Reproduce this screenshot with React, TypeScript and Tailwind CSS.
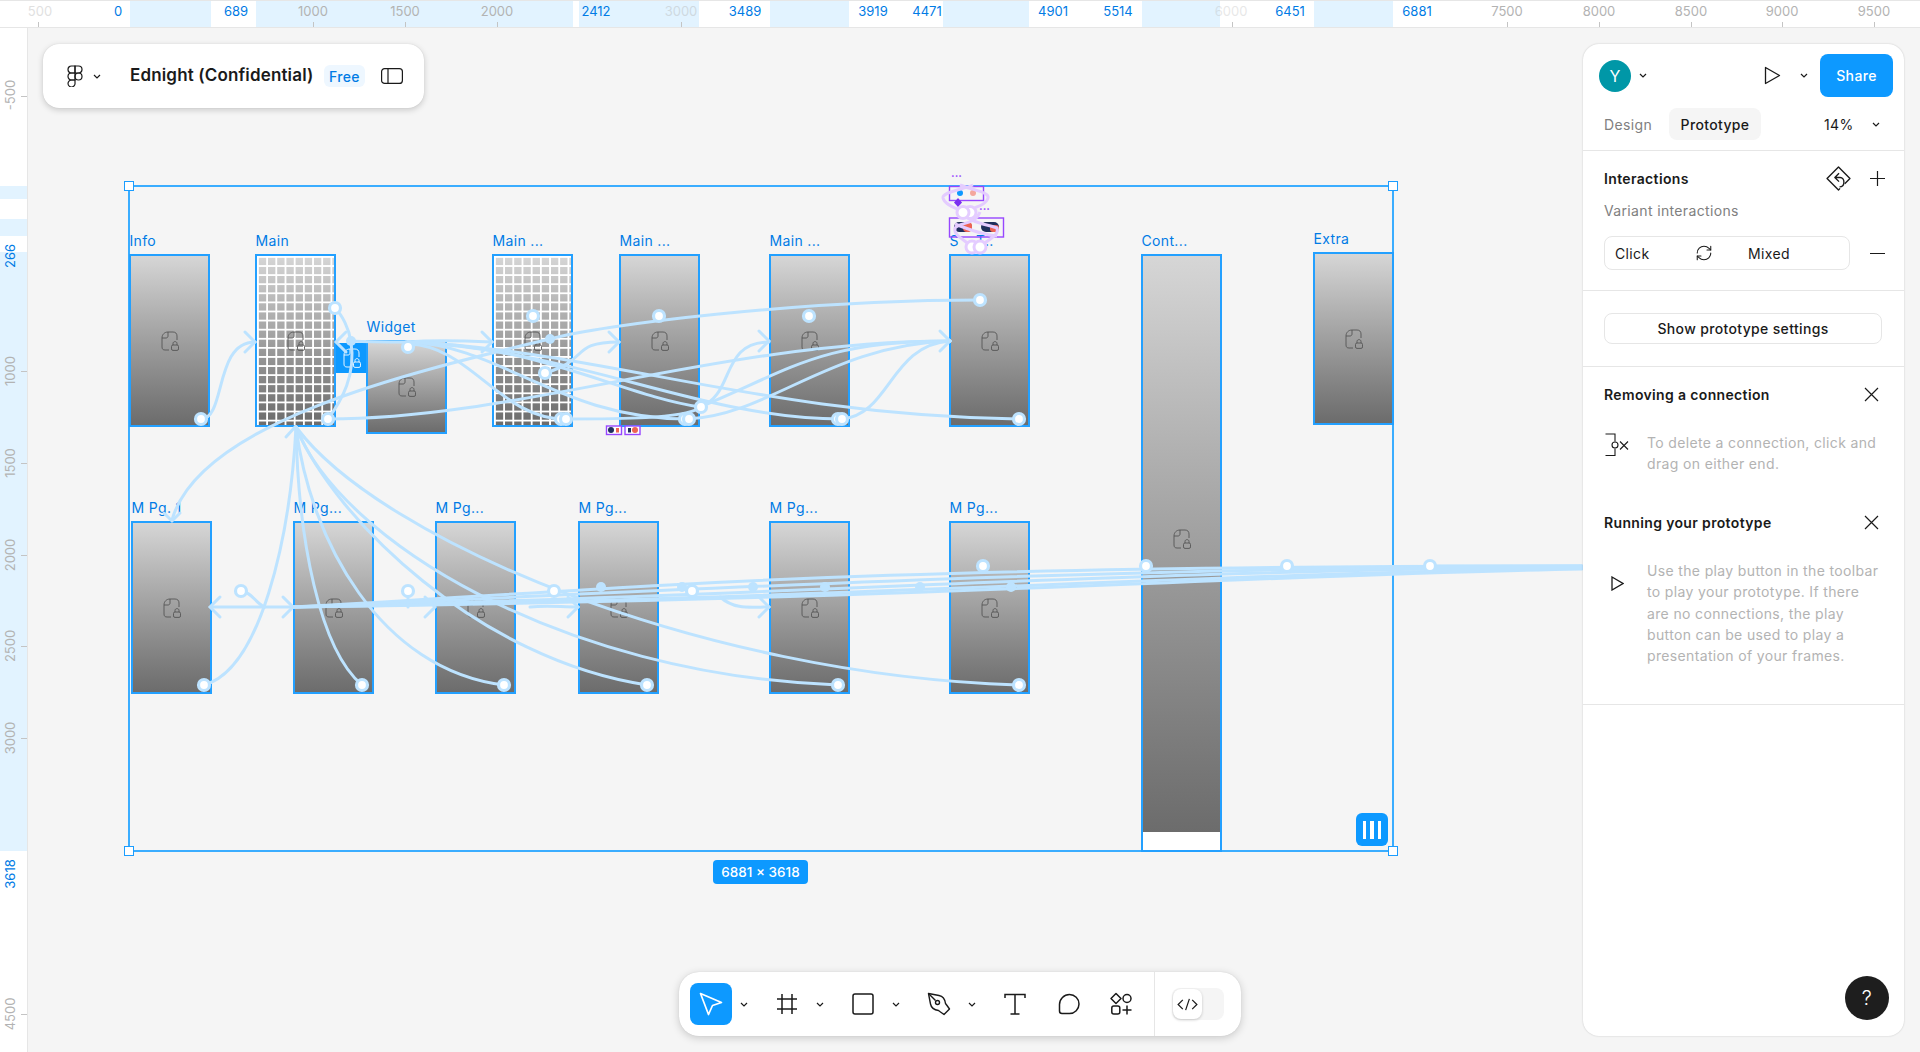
import React from "react";
import { RefreshCw } from "lucide-react";

const topBands = [
  "left-[130px] w-[81px]",
  "left-[256px] w-[317px]",
  "left-[579px] w-[120px]",
  "left-[770px] w-[79px]",
  "left-[943px] w-[86px]",
  "left-[1142px] w-[78px]",
  "left-[1314px] w-[79px]",
];

const topLabels = [
  { t: "500", c: "left-[40px] text-[#b3b3b3] opacity-40" },
  { t: "0", c: "left-[118px] text-[#007be5]" },
  { t: "689", c: "left-[236px] text-[#007be5]" },
  { t: "1000", c: "left-[313px] text-[#b3b3b3]" },
  { t: "1500", c: "left-[405px] text-[#b3b3b3]" },
  { t: "2000", c: "left-[497px] text-[#b3b3b3]" },
  { t: "2412", c: "left-[596px] text-[#007be5]" },
  { t: "3000", c: "left-[681px] text-[#b3b3b3] opacity-40" },
  { t: "3489", c: "left-[745px] text-[#007be5]" },
  { t: "3919", c: "left-[873px] text-[#007be5]" },
  { t: "4471", c: "left-[927px] text-[#007be5]" },
  { t: "4901", c: "left-[1053px] text-[#007be5]" },
  { t: "5514", c: "left-[1118px] text-[#007be5]" },
  { t: "6000", c: "left-[1231px] text-[#b3b3b3] opacity-30" },
  { t: "6451", c: "left-[1290px] text-[#007be5]" },
  { t: "6881", c: "left-[1417px] text-[#007be5]" },
  { t: "7500", c: "left-[1507px] text-[#b3b3b3]" },
  { t: "8000", c: "left-[1599px] text-[#b3b3b3]" },
  { t: "8500", c: "left-[1691px] text-[#b3b3b3]" },
  { t: "9000", c: "left-[1782px] text-[#b3b3b3]" },
  { t: "9500", c: "left-[1874px] text-[#b3b3b3]" },
];

const topTicks = [
  "left-[38px]", "left-[313px]", "left-[405px]", "left-[497px]", "left-[681px]", "left-[1232px]",
  "left-[1507px]", "left-[1599px]", "left-[1691px]", "left-[1782px]", "left-[1874px]",
];

const leftBands = ["top-[158px] h-[13px]", "top-[191px] h-[17px]", "top-[224px] h-[599px]"];

const leftLabels = [
  { t: "-500", c: "top-[67px] text-[#b3b3b3]" },
  { t: "266", c: "top-[228px] text-[#007be5]" },
  { t: "1000", c: "top-[343px] text-[#b3b3b3]" },
  { t: "1500", c: "top-[435px] text-[#b3b3b3]" },
  { t: "2000", c: "top-[527px] text-[#b3b3b3]" },
  { t: "2500", c: "top-[618px] text-[#b3b3b3]" },
  { t: "3000", c: "top-[710px] text-[#b3b3b3]" },
  { t: "3618", c: "top-[846px] text-[#007be5]" },
  { t: "4500", c: "top-[986px] text-[#b3b3b3]" },
];

const leftTicks = ["top-[68px]", "top-[343px]", "top-[435px]", "top-[527px]", "top-[618px]", "top-[710px]", "top-[986px]"];

const frames = [
  { label: "Info", box: "left-[129px] top-[254px] w-[81px] h-[173px]" },
  { label: "Main", box: "left-[255px] top-[254px] w-[81px] h-[173px]", grid: true },
  { label: "Widget", box: "left-[366px] top-[340px] w-[81px] h-[94px]" },
  { label: "Main ...", box: "left-[492px] top-[254px] w-[81px] h-[173px]", grid: true },
  { label: "Main ...", box: "left-[619px] top-[254px] w-[81px] h-[173px]" },
  { label: "Main ...", box: "left-[769px] top-[254px] w-[81px] h-[173px]" },
  { label: "S\u00A0\u00A0\u00A0\u00A0T..", box: "left-[949px] top-[254px] w-[81px] h-[173px]" },
  { label: "Extra", box: "left-[1313px] top-[252px] w-[81px] h-[173px]" },
  { label: "M Pg. 1", box: "left-[131px] top-[521px] w-[81px] h-[173px]" },
  { label: "M Pg...", box: "left-[293px] top-[521px] w-[81px] h-[173px]" },
  { label: "M Pg...", box: "left-[435px] top-[521px] w-[81px] h-[173px]" },
  { label: "M Pg...", box: "left-[578px] top-[521px] w-[81px] h-[173px]" },
  { label: "M Pg...", box: "left-[769px] top-[521px] w-[81px] h-[173px]" },
  { label: "M Pg...", box: "left-[949px] top-[521px] w-[81px] h-[173px]" },
];

const links = [
  "M201 419C226 419 214 342 255 342",
  "M328 419C342 400 356 375 351 342C349 328 342 315 335 308",
  "M328 419C520 419 720 341 950 341",
  "M408 342C430 340 470 341 492 342",
  "M351 341C370 342 390 342 408 342",
  "M408 344C470 345 500 419 565 419",
  "M408 342C500 345 560 419 688 419",
  "M408 342C540 345 620 395 700 407",
  "M408 342C580 350 700 419 842 419",
  "M408 342C600 350 760 415 1018 419",
  "M545 373C590 360 570 342 619 342",
  "M700 407C735 395 720 342 769 342",
  "M700 407C790 370 820 341 950 341",
  "M688 419C770 415 830 345 950 341",
  "M842 419C890 415 890 345 950 341",
  "M565 419C620 419 680 419 700 408",
  "M980 300C800 300 600 325 550 339C420 370 200 420 172 520",
  "M204 685C260 670 290 540 296 427",
  "M362 685C320 650 298 540 296 427",
  "M504 685C380 670 310 540 296 427",
  "M647 685C480 660 335 520 296 427",
  "M838 685C560 675 340 540 296 427",
  "M1018 685C700 675 380 540 296 427",
  "M211 607H293",
  "M241 591C252 592 256 604 265 607",
  "M408 591V607",
  "M293 607C620 590 800 566 1582 566",
  "M293 607C700 590 1000 570 1582 566",
  "M293 607C750 597 1100 571 1582 567",
  "M293 607C800 600 1200 574 1582 568",
  "M293 607C900 600 1250 575 1582 569",
  "M530 607C548 605 560 607 578 607",
  "M720 597C735 610 750 607 769 607",
];

const arrows = [
  "M245 332L255 342L245 352",
  "M346 332L336 342L346 352",
  "M482 332L492 342L482 352",
  "M609 332L619 342L609 352",
  "M759 331L769 341L759 351",
  "M940 331L950 341L940 351",
  "M286 437L295 427L304 437",
  "M164 513L172 521L180 513",
  "M220 597L210 607L220 617",
  "M283 597L293 607L283 617",
  "M425 597L435 607L425 617",
  "M568 597L578 607L568 617",
  "M759 597L769 607L759 617",
];

const nodes = [
  [201, 419], [335, 308], [328, 419], [408, 347], [533, 316], [545, 373], [561, 419], [566, 419],
  [659, 316], [685, 419], [689, 419], [701, 407], [809, 316], [838, 419], [842, 419], [980, 300], [1019, 419],
  [204, 685], [362, 685], [504, 685], [647, 685], [838, 685], [1019, 685], [241, 591], [408, 591],
  [554, 591], [692, 591], [983, 566], [1146, 566], [1287, 566], [1430, 566],
];

const dots = [
  [351, 341], [550, 339], [601, 587], [682, 587], [753, 587], [825, 587], [920, 587], [1011, 587],
];

const handles = [
  "left-[124px] top-[181px]",
  "left-[1388px] top-[181px]",
  "left-[124px] top-[846px]",
  "left-[1388px] top-[846px]",
];

function DocLock({ stroke = "#555555", className = "" }: { stroke?: string; className?: string }) {
  return (
    <svg viewBox="0 0 18 20" fill="none" stroke={stroke} strokeWidth="0.9" className={`w-[18px] h-[20px] ${className}`}>
      <path d="M7 1H12C14.5 1 16 2.5 16 5V9" />
      <path d="M7 1C3.5 1 1 3.5 1 7V16C1 18 2 19 4 19H8" />
      <path d="M7 1V5C7 6.2 6.2 7 5 7H1" />
      <rect x="10.5" y="14" width="7" height="5.4" rx="1.5" />
      <path d="M12 14V12.5C12 10 16 10 16 12.5V14" />
    </svg>
  );
}

function Chevron({ className = "" }: { className?: string }) {
  return (
    <svg viewBox="0 0 8 5" fill="none" stroke="#1a1a1a" strokeWidth="1.2" className={`w-[8px] h-[5px] ${className}`}>
      <path d="M1 1L4 4L7 1" />
    </svg>
  );
}

function Cross() {
  return (
    <svg viewBox="0 0 15 15" fill="none" stroke="#1a1a1a" strokeWidth="1.2" className="w-[15px] h-[15px]">
      <path d="M1 1L14 14M14 1L1 14" />
    </svg>
  );
}

function FigmaLogo() {
  return (
    <svg viewBox="0 0 16 22" fill="none" stroke="#1a1a1a" strokeWidth="1.2" className="w-[16px] h-[22px]">
      <path d="M8 1H4.5A3.5 3.5 0 0 0 4.5 8H8Z" />
      <path d="M8 1H11.5A3.5 3.5 0 0 1 11.5 8H8Z" />
      <path d="M8 8H4.5A3.5 3.5 0 0 0 4.5 15H8Z" />
      <circle cx="11.5" cy="11.5" r="3.5" />
      <path d="M4.5 15H8V18A3.5 3.5 0 1 1 4.5 15Z" />
    </svg>
  );
}

function Tool({ children, className = "" }: { children: React.ReactNode; className?: string }) {
  return <div className={`w-[42px] h-[42px] flex items-center justify-center rounded-lg ${className}`}>{children}</div>;
}

function ToolChevron() {
  return (
    <div className="w-[24px] flex justify-center">
      <Chevron />
    </div>
  );
}

function Toolbar() {
  const ic = "w-[24px] h-[24px]";
  return (
    <div className="absolute left-[679px] top-[972px] w-[562px] h-[64px] bg-white rounded-[20px] shadow-[0_2px_8px_rgba(0,0,0,0.18),0_0_1px_rgba(0,0,0,0.15)] flex items-center pl-[11px]">
      <Tool className="bg-[#0d99ff]">
        <svg viewBox="0 0 24 24" fill="none" stroke="white" strokeWidth="1.7" strokeLinejoin="round" className={ic}>
          <path d="M1.5 1.5L22.5 10.5L13.5 13.5L9.5 22.5Z" />
        </svg>
      </Tool>
      <ToolChevron />
      <Tool className="ml-[10px]">
        <svg viewBox="0 0 24 24" fill="none" stroke="#1a1a1a" strokeWidth="1.5" className={ic}>
          <path d="M7 2V22M17 2V22M2 7H22M2 17H22" />
        </svg>
      </Tool>
      <ToolChevron />
      <Tool className="ml-[10px]">
        <svg viewBox="0 0 24 24" fill="none" stroke="#1a1a1a" strokeWidth="1.5" className={ic}>
          <rect x="2" y="2" width="20" height="20" rx="2" />
        </svg>
      </Tool>
      <ToolChevron />
      <Tool className="ml-[10px]">
        <svg viewBox="0 0 24 24" fill="none" stroke="#1a1a1a" strokeWidth="1.4" strokeLinejoin="round" className={ic}>
          <path d="M1.5 1.5L12 3.5C15.5 4.2 18 7.5 18.5 11.5L20 13.5L22.5 17L17 22.5L13.5 20L11.5 18.5C7.5 18 4.2 15.5 3.5 12Z" />
          <path d="M1.5 1.5L8.5 8.5" />
          <circle cx="10.5" cy="10.5" r="2" />
        </svg>
      </Tool>
      <ToolChevron />
      <Tool className="ml-[10px]">
        <svg viewBox="0 0 24 24" fill="none" stroke="#1a1a1a" strokeWidth="1.5" className={ic}>
          <path d="M2 6V2.5H22V6M12 2.5V22M7.5 22H16.5" />
        </svg>
      </Tool>
      <Tool className="ml-[12px]">
        <svg viewBox="0 0 24 24" fill="none" stroke="#1a1a1a" strokeWidth="1.5" className={ic}>
          <path d="M12.5 2.5A9.5 9.5 0 0 1 12.5 21.5H5C3.5 21.5 2.5 20.5 2.5 19V12.5A10 10 0 0 1 12.5 2.5Z" />
        </svg>
      </Tool>
      <Tool className="ml-[10px]">
        <svg viewBox="0 0 24 24" fill="none" stroke="#1a1a1a" strokeWidth="1.5" strokeLinejoin="round" className={ic}>
          <path d="M7 1.5L12 6.5L7 11.5L2 6.5Z" />
          <circle cx="18" cy="6.5" r="4" />
          <rect x="2.8" y="14" width="8" height="8" rx="2" />
          <path d="M18 13.5V22.5M13.5 18H22.5" />
        </svg>
      </Tool>
      <div className="w-px self-stretch bg-[#e6e6e6] ml-[12px]" />
      <div className="w-[52px] h-[32px] ml-[17px] rounded-lg bg-[#f5f5f5] flex items-center pl-[1px]">
        <div className="w-[29px] h-[30px] rounded-lg bg-white shadow-[0_1px_3px_rgba(0,0,0,0.2)] flex items-center justify-center">
          <svg viewBox="0 0 22 16" fill="none" stroke="#1a1a1a" strokeWidth="1.3" className="w-[21px] h-[15px]">
            <path d="M6 3L1 8L6 13M16 3L21 8L16 13M13 2L9 14" />
          </svg>
        </div>
      </div>
    </div>
  );
}

function RightPanel() {
  return (
    <div className="absolute left-[1583px] top-[44px] w-[321px] h-[992px] bg-white rounded-[16px] shadow-[0_0_2px_rgba(0,0,0,0.2)] flex flex-col text-[14px] tracking-[0.35px] text-[#1a1a1a]">
      <div className="flex flex-col h-[107px] border-b border-[#e6e6e6]">
        <div className="flex items-center h-[43px] mt-[10px] pl-[16px] pr-[11px]">
          <div className="w-[32px] h-[32px] rounded-full bg-[#0097a7] text-white flex items-center justify-center text-[16px]">Y</div>
          <Chevron className="ml-[8px]" />
          <svg viewBox="0 0 17 19" fill="none" stroke="#1a1a1a" strokeWidth="1.3" strokeLinejoin="round" className="w-[17px] h-[19px] ml-auto">
            <path d="M1.5 1.5L15.5 9.5L1.5 17.5Z" />
          </svg>
          <Chevron className="ml-[19px]" />
          <div className="w-[73px] h-[43px] ml-[12px] rounded-lg bg-[#0d99ff] text-white font-medium flex items-center justify-center">Share</div>
        </div>
        <div className="flex items-center h-[32px] mt-[11px] pl-[21px]">
          <span className="text-[#808080] w-[65px]">Design</span>
          <span className="w-[92px] h-[32px] rounded-lg bg-[#f5f5f5] font-medium flex items-center justify-center">Prototype</span>
          <span className="w-[28px] ml-[63px] whitespace-nowrap">14%</span>
          <Chevron className="ml-[20px]" />
        </div>
      </div>
      <div className="flex flex-col h-[140px] border-b border-[#e6e6e6] px-[21px]">
        <div className="flex items-center h-[24px] mt-[15px]">
          <span className="font-semibold">Interactions</span>
          <svg viewBox="0 0 24 24" fill="none" stroke="#1a1a1a" strokeWidth="1.3" strokeLinejoin="round" className="w-[25px] h-[25px] ml-auto">
            <path d="M13.5 21.5L12 23L1 12L12 1L23 12L18 17" />
            <path d="M12.5 7L8.5 11L12.500 15M8.500 11H13.500C18.500 11 18.500 20 13 20" />
          </svg>
          <svg viewBox="0 0 15 15" fill="none" stroke="#1a1a1a" strokeWidth="1.2" className="w-[15px] h-[15px] ml-[19px] mr-[-2px]">
            <path d="M7.5 0V15M0 7.5H15" />
          </svg>
        </div>
        <div className="text-[#808080] mt-[11px] leading-[20px]">Variant interactions</div>
        <div className="flex items-center mt-[15px]">
          <div className="w-[246px] h-[34px] rounded-lg border border-[#e6e6e6] flex items-center pl-[10px]">
            <span className="w-[80px]">Click</span>
            <RefreshCw size={18} strokeWidth={1.4} />
            <span className="ml-[35px]">Mixed</span>
          </div>
          <div className="w-[15px] h-px bg-[#1a1a1a] ml-auto mr-[-2px]" />
        </div>
      </div>
      <div className="h-[76px] border-b border-[#e6e6e6] px-[21px] pt-[22px]">
        <div className="w-[278px] h-[31px] rounded-lg border border-[#e6e6e6] font-medium flex items-center justify-center">Show prototype settings</div>
      </div>
      <div className="flex items-center justify-between pl-[21px] pr-[25px] mt-[17px] h-[20px]">
        <span className="font-semibold">Removing a connection</span>
        <Cross />
      </div>
      <div className="flex pl-[22px] mt-[28px]">
        <svg viewBox="0 0 24 24" fill="none" stroke="#1a1a1a" strokeWidth="1.1" className="w-[24px] h-[24px] mt-[1px]">
          <path d="M0.5 1H10V8.5M10 15.5V22.5H0.5" />
          <circle cx="10" cy="12" r="3" />
          <path d="M15 8.5L23 16.5M23 8.5L15 16.5" />
        </svg>
        <p className="w-[240px] ml-[18px] text-[#b3b3b3] leading-[21.3px]">To delete a connection, click and drag on either end.</p>
      </div>
      <div className="flex items-center justify-between pl-[21px] pr-[25px] mt-[38px] h-[20px]">
        <span className="font-semibold">Running your prototype</span>
        <Cross />
      </div>
      <div className="flex pl-[22px] mt-[27.5px]">
        <div className="w-[24px] flex justify-center pt-[16px]">
          <svg viewBox="0 0 13 15" fill="none" stroke="#1a1a1a" strokeWidth="1.3" className="w-[13px] h-[15px]">
            <path d="M1 1L12 7.5L1 14Z" />
          </svg>
        </div>
        <p className="w-[240px] ml-[18px] text-[#b3b3b3] leading-[21.3px] whitespace-nowrap">
          Use the play button in the toolbar
          <br />
          to play your prototype. If there
          <br />
          are no connections, the play
          <br />
          button can be used to play a
          <br />
          presentation of your frames.
        </p>
      </div>
      <div className="h-px bg-[#e6e6e6] mt-[37px]" />
      <div className="mt-auto ml-auto mr-[15px] mb-[16px] w-[44px] h-[44px] rounded-full bg-[#1e1e1e] text-white flex items-center justify-center text-[20px] font-light">?</div>
    </div>
  );
}

export default function App() {
  return (
    <div className="relative w-full h-[1052px] overflow-hidden bg-[#f5f5f5] font-['Inter',sans-serif] text-[#1a1a1a]">
      {/* rulers */}
      <div className="relative h-[28px] bg-white border-t border-b border-[#e6e6e6] overflow-hidden">
        {topBands.map((c) => (
          <div key={c} className={`absolute top-0 h-full bg-[#e2f3ff] ${c}`} />
        ))}
        {topTicks.map((c) => (
          <div key={c} className={`absolute top-[21px] h-[7px] w-px bg-[#c4c4c4] ${c}`} />
        ))}
        {topLabels.map((l) => (
          <span key={l.t} className={`absolute top-[2px] -translate-x-1/2 text-[13px] leading-[16px] ${l.c}`}>
            {l.t}
          </span>
        ))}
      </div>
      <div className="relative w-[28px] h-[1024px] bg-white border-r border-[#e6e6e6] overflow-hidden">
        {leftBands.map((c) => (
          <div key={c} className={`absolute left-0 w-full bg-[#e2f3ff] ${c}`} />
        ))}
        {leftTicks.map((c) => (
          <div key={c} className={`absolute left-[21px] h-px w-[6px] bg-[#c4c4c4] ${c}`} />
        ))}
        {leftLabels.map((l) => (
          <span key={l.t} className={`absolute left-[10px] -translate-x-1/2 -translate-y-1/2 -rotate-90 text-[13px] leading-[16px] whitespace-nowrap ${l.c}`}>
            {l.t}
          </span>
        ))}
      </div>

      {/* canvas frames */}
      <div className="absolute left-[128px] top-[185px] w-[1266px] h-[667px] border-2 border-[#3aadff]" />
      {frames.map((f) => (
        <div
          key={f.box}
          className={`absolute ${f.box} border-2 border-[#23a0ff] bg-linear-to-b from-[#d6d6d6] to-[#6c6c6c] flex items-center justify-center`}
        >
          {f.grid && <div className="absolute inset-0 bg-[linear-gradient(to_right,#ffffff_1.5px,transparent_1.5px),linear-gradient(to_bottom,#ffffff_1.5px,transparent_1.5px)] bg-size-[9.2px_9.1px]" />}
          <DocLock className="relative" />
          <span className="absolute left-[-1.5px] bottom-full mb-[7px] text-[14px] tracking-[0.35px] leading-[17px] text-[#007be5] whitespace-nowrap">{f.label}</span>
        </div>
      ))}
      <div className="absolute left-[1141px] top-[254px] w-[81px] h-[598px] border-2 border-[#23a0ff] bg-white">
        <div className="h-[576px] bg-linear-to-b from-[#d6d6d6] to-[#6c6c6c] flex items-center justify-center pb-[10px]">
          <DocLock />
        </div>
        <span className="absolute left-[-1.5px] bottom-full mb-[7px] text-[14px] tracking-[0.35px] leading-[17px] text-[#007be5] whitespace-nowrap">Cont...</span>
      </div>
      <div className="absolute left-[336px] top-[343px] w-[30px] h-[30px] bg-[#0d99ff] flex items-center justify-start pl-[7px]">
        <DocLock stroke="#ffffff" />
      </div>

      {/* prototype connections */}
      <svg viewBox="0 0 1920 1052" fill="none" className="absolute inset-0 w-[1920px] h-[1052px]">
        <g stroke="#bde3ff" strokeWidth="3" strokeLinecap="round">
          {links.map((d) => (
            <path key={d} d={d} />
          ))}
          {arrows.map((d) => (
            <path key={d} d={d} />
          ))}
        </g>
        <path d="M1430 567H1582" stroke="#bde3ff" strokeWidth="5" />
        {dots.map(([x, y]) => (
          <circle key={`${x}-${y}`} cx={x} cy={y} r="5" fill="#bde3ff" />
        ))}
        {nodes.map(([x, y]) => (
          <circle key={`${x}-${y}`} cx={x} cy={y} r="5.500" fill="#ffffff" stroke="#bde3ff" strokeWidth="3.200" />
        ))}
        <rect x="606.5" y="426" width="15" height="8.5" fill="#ffffff" stroke="#9747ff" strokeWidth="1.4" />
        <rect x="625" y="426" width="15" height="8.5" fill="#ffffff" stroke="#9747ff" strokeWidth="1.4" />
        <circle cx="611" cy="430" r="3" fill="#1f2f5c" />
        <rect x="616" y="428" width="3" height="4.5" fill="#ee6352" />
        <rect x="628" y="428" width="3" height="4.5" fill="#1f2f5c" />
        <circle cx="635" cy="430" r="3" fill="#ee6352" />
        <rect x="949.5" y="186.5" width="34" height="14" stroke="#9747ff" strokeWidth="1.4" />
        <rect x="949.5" y="218" width="54" height="19" stroke="#9747ff" strokeWidth="1.4" />
        <rect x="954" y="222" width="18" height="10" rx="5" fill="#1f2f5c" />
        <rect x="963" y="222" width="9" height="10" rx="4" fill="#ee6352" />
        <rect x="981" y="222" width="18" height="10" rx="5" fill="#1f2f5c" />
        <rect x="990" y="225" width="9" height="7" rx="3" fill="#ee6352" />
        <circle cx="960" cy="193" r="3" fill="#0d99ff" />
        <circle cx="973" cy="193" r="3" fill="#f4a79d" />
        <path d="M958 198L962 202.500L958 207L954 202.500Z" fill="#7b2ff0" />
        <g stroke="#e4ccff" strokeWidth="3">
          <path d="M960 185C972 190 990 192 988 198C986 206 972 208 963 212" />
          <path d="M973 185C962 190 942 192 943 198C945 206 958 208 963 212" />
          <path d="M963 212C966 222 990 225 997 228C1000 236 986 240 980 247" />
          <path d="M980 212C975 225 960 222 955 228C953 236 966 240 972 247" />
          <path d="M955 224C965 228 985 235 997 236" />
        </g>
        <circle cx="970" cy="212.500" r="6" fill="#ffffff" stroke="#e4ccff" strokeWidth="3" />
        <circle cx="963" cy="212.500" r="6" fill="#ffffff" stroke="#e4ccff" strokeWidth="3" />
        <circle cx="972" cy="247" r="6" fill="#ffffff" stroke="#e4ccff" strokeWidth="3" />
        <circle cx="980" cy="247" r="6" fill="#ffffff" stroke="#e4ccff" strokeWidth="3" />
      </svg>
      <span className="absolute left-[951px] top-[167px] text-[11px] leading-[12px] font-bold text-[#9747ff]">...</span>
      <span className="absolute left-[979px] top-[200px] text-[11px] leading-[12px] font-bold text-[#9747ff]">...</span>

      {handles.map((c) => (
        <div key={c} className={`absolute w-[10px] h-[10px] bg-white border-[1.5px] border-[#1b9dff] ${c}`} />
      ))}
      <div className="absolute left-[1356px] top-[813px] w-[32px] h-[33px] rounded-[6px] bg-[#0d99ff] flex items-center justify-center gap-[4px]">
        <div className="w-[3.5px] h-[18px] bg-white" />
        <div className="w-[3.5px] h-[18px] bg-white" />
        <div className="w-[3.5px] h-[18px] bg-white" />
      </div>
      <div className="absolute left-[713px] top-[860px] w-[95px] h-[24px] rounded-[4px] bg-[#0d99ff] text-white text-[13.500px] font-medium flex items-center justify-center">6881 × 3618</div>

      {/* file title panel */}
      <div className="absolute left-[43px] top-[44px] w-[381px] h-[64px] bg-white rounded-[16px] shadow-[0_2px_6px_rgba(0,0,0,0.18),0_0_1px_rgba(0,0,0,0.15)] flex items-center pl-[24px]">
        <FigmaLogo />
        <Chevron className="ml-[10px]" />
        <span className="ml-[29px] w-[194px] text-[17px] tracking-[0.15px] font-semibold whitespace-nowrap">Ednight (Confidential)</span>
        <span className="w-[41px] h-[22px] rounded-md bg-[#eef7ff] text-[#007be5] text-[14px] tracking-[0.35px] font-medium flex items-center justify-center">Free</span>
        <svg viewBox="0 0 22 16" fill="none" stroke="#1a1a1a" strokeWidth="1.2" className="w-[22px] h-[16px] ml-[16px]">
          <rect x="0.6" y="0.6" width="20.800" height="14.800" rx="3" />
          <path d="M7 0.6V15.400" />
        </svg>
      </div>

      <Toolbar />
      <RightPanel />
    </div>
  );
}
